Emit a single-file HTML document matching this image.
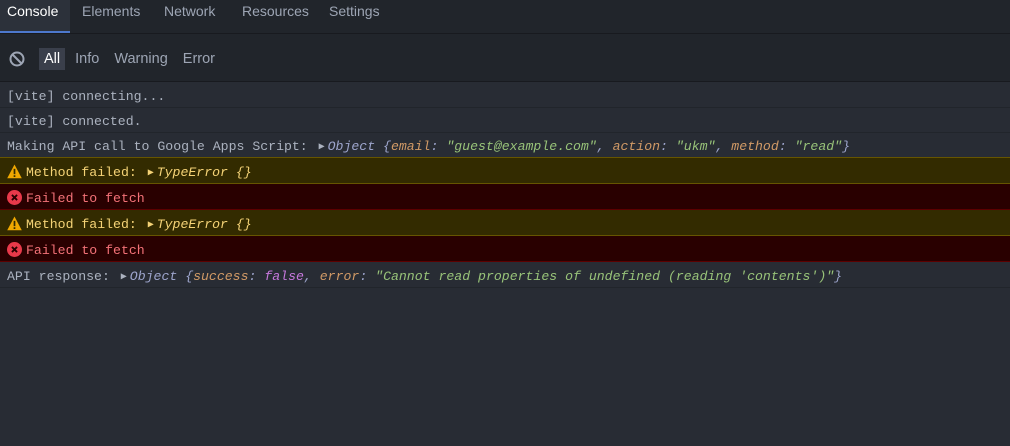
<!DOCTYPE html>
<html><head><style>
body{margin:0;width:1010px;height:446px;background:#282c34;overflow:hidden;font-family:"Liberation Sans",sans-serif;}
.tabs{height:33px;background:#21252b;border-bottom:1px solid #181a1f;position:relative;font-size:14px;color:#9da5b4;}
.tab{position:absolute;top:0;line-height:22px;height:32px;}
.tab.act{left:0;width:70px;background:#2c313a;color:#fff;border-bottom:2px solid #4d78cc;padding-left:7px;box-sizing:border-box;height:33px}
.tool{height:48px;border-bottom:1px solid #181a1f;display:flex;align-items:center;font-size:14.5px;color:#9da5b4;background:#21252b;padding-top:3px;box-sizing:border-box}
.f{padding:3px 5px;margin-right:5px}
.f.act{background:#3a3f4b;color:#fff;margin-right:5px}
.row{height:22px;padding-top:2px;border-bottom:1px solid #21252b;font-family:"Liberation Mono",monospace;font-size:13.2px;color:#abb2bf;line-height:24px;padding-left:7px;white-space:pre;position:relative}
.w{height:23px;line-height:25px;background:#332b00;border-bottom:1px solid #665500;color:#f5d376;}
.e{height:23px;line-height:25px;background:#290000;border-bottom:1px solid #5c0000;color:#f47278;}
.last{height:23px;line-height:25px}
i{font-style:italic}
.k{color:#d19a66}.s{color:#98c379}.b{color:#c678dd}.o{color:#9da5cc}
.tri{display:inline-block;width:12px;text-align:center;font-size:10px;color:#abb2bf;vertical-align:1px}
.ic{display:inline-block;width:15px;height:15px;vertical-align:-3px;margin-right:4px}
</style></head><body>
<div class="tabs"><div class="tab act">Console</div><div class="tab" style="left:82px">Elements</div><div class="tab" style="left:164px">Network</div><div class="tab" style="left:242px">Resources</div><div class="tab" style="left:329px">Settings</div></div>
<div class="tool"><svg width="18" height="18" style="margin:0 13px 0 8px" viewBox="0 0 18 18"><circle cx="9" cy="9" r="6.5" fill="none" stroke="#9da5b4" stroke-width="2"/><line x1="4.5" y1="4.5" x2="13.5" y2="13.5" stroke="#9da5b4" stroke-width="2"/></svg><span class="f act">All</span><span class="f">Info</span><span class="f">Warning</span><span class="f">Error</span></div>
<div style="height:1px"></div>
<div class="row">[vite] connecting...</div>
<div class="row">[vite] connected.</div>
<div class="row" style="border-bottom-color:#665500">Making API call to Google Apps Script: <span class="tri">▶</span><i class="o">Object {<span class="k">email</span>: <span class="s">"guest@example.com"</span>, <span class="k">action</span>: <span class="s">"ukm"</span>, <span class="k">method</span>: <span class="s">"read"</span>}</i></div>
<div class="row w"><svg class="ic" viewBox="0 0 14 14"><path d="M7 0.5L13.8 13.3H0.2Z" fill="#f0a800"/><rect x="6.2" y="4.5" width="1.6" height="5" fill="#332b00"/><rect x="6.2" y="10.5" width="1.6" height="1.6" fill="#332b00"/></svg>Method failed: <span class="tri" style="color:#f5d376">▶</span><i>TypeError {}</i></div>
<div class="row e"><svg class="ic" viewBox="0 0 14 14"><circle cx="7" cy="7" r="7" fill="#e8394a"/><path d="M4.6 4.6L9.4 9.4M9.4 4.6L4.6 9.4" stroke="#290000" stroke-width="1.7"/></svg>Failed to fetch</div>
<div class="row w"><svg class="ic" viewBox="0 0 14 14"><path d="M7 0.5L13.8 13.3H0.2Z" fill="#f0a800"/><rect x="6.2" y="4.5" width="1.6" height="5" fill="#332b00"/><rect x="6.2" y="10.5" width="1.6" height="1.6" fill="#332b00"/></svg>Method failed: <span class="tri" style="color:#f5d376">▶</span><i>TypeError {}</i></div>
<div class="row e"><svg class="ic" viewBox="0 0 14 14"><circle cx="7" cy="7" r="7" fill="#e8394a"/><path d="M4.6 4.6L9.4 9.4M9.4 4.6L4.6 9.4" stroke="#290000" stroke-width="1.7"/></svg>Failed to fetch</div>
<div class="row last">API response: <span class="tri">▶</span><i class="o">Object {<span class="k">success</span>: <span class="b">false</span>, <span class="k">error</span>: <span class="s">"Cannot read properties of undefined (reading 'contents')"</span>}</i></div>
</body></html>
